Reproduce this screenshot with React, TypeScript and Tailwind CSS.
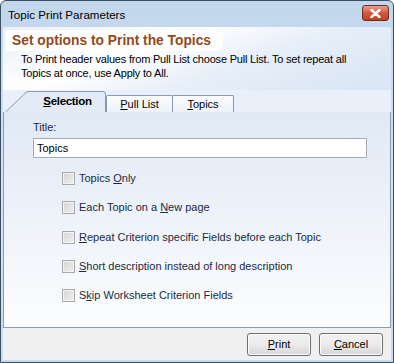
import React from 'react';

const font = { fontFamily: '"Liberation Sans", Arial, sans-serif' };

function Check({ children }: { children: React.ReactNode }) {
  return (
    <div className="flex items-center h-[29.3px]">
      <span className="w-[13px] h-[13px] border border-[#a9a9a9] bg-gradient-to-br from-[#d4d4d4] to-[#f0f0f0] shadow-[inset_0_0_0_1px_#f4f4f4]" />
      <span className="ml-[4px] text-[11px] text-[#1b2a3f] leading-none">{children}</span>
    </div>
  );
}

function Btn({ children }: { children: React.ReactNode }) {
  return (
    <button className="w-[64px] h-[23px] rounded-[3px] border border-[#707070] bg-gradient-to-b from-[#f2f2f2] via-[#ebebeb] to-[#d6d6d6] shadow-[inset_0_0_0_1px_#fcfcfc] text-[11px] text-black">
      {children}
    </button>
  );
}

export default function App() {
  return (
    <div style={font} className="w-[394px] h-[363px] overflow-hidden">
      <div className="w-full h-full flex flex-col rounded-t-[6px] border border-[#3a4f66] bg-gradient-to-b from-[#c2d6ec] via-[#d5e4f4] to-[#c8dcf0]">
        {/* Title bar */}
        <div className="h-[26px] flex items-center justify-between pl-[7px] pr-[4px]">
          <span className="text-[11.6px] text-black mt-[1px]">Topic Print Parameters</span>
          <div className="w-[27px] h-[16px] rounded-[3px] border border-[#6d2e22] bg-gradient-to-b from-[#e8a190] via-[#d1563c] to-[#c1421f] flex items-center justify-center mt-[-2px]">
            <svg width="11" height="9" viewBox="0 0 11 9">
              <path d="M1.5 1 L9.5 8 M9.5 1 L1.5 8" stroke="#fff" strokeWidth="2.4" strokeLinecap="round" />
            </svg>
          </div>
        </div>

        {/* Client area */}
        <div className="flex-1 flex flex-col mx-[2px] mb-[2px]">
          {/* Header */}
          <div className="h-[63px] pt-[1px] bg-[linear-gradient(160deg,#e8f0fa_0%,#ffffff_35%,#e7eff9_60%,#d8e5f3_100%)]">
            <div className="inline-flex items-center h-[21px] pl-[6px] pr-[12px] rounded-r-[7px] rounded-l-[2px] ml-[3px] bg-white">
              <span className="text-[13.8px] font-bold text-[#94491c] leading-none">Set options to Print the Topics</span>
            </div>
            <p className="mt-0 ml-[18px] mr-[18px] text-[11px] tracking-[-0.2px] leading-[14px] text-black">
              To Print header values from Pull List choose Pull List. To set repeat all Topics at once, use Apply to All.
            </p>
          </div>

          {/* Tabs */}
          <div className="h-[22px] flex items-end bg-[#e9f0f9]">
            <div className="relative w-[101px] h-[21px] ml-[2px] flex items-center justify-center pl-[34px]">
              <svg className="absolute inset-0" width="101" height="21" viewBox="0 0 101 21">
                <path d="M0.5 21 L21 1.5 Q22 0.5 23 0.5 L98 0.5 Q100.5 0.5 100.5 3 L100.5 21" fill="#e2eaf5" stroke="#8d9aab" />
              </svg>
              <span className="relative text-[11.5px] font-bold text-black mr-[10px] mt-[1px] tracking-[-0.3px]">
                <u>S</u>election
              </span>
            </div>
            <div className="w-[67px] h-[17px] border border-b-0 border-[#8d9aab] rounded-t-[2px] bg-gradient-to-b from-[#fbfcfe] to-[#edf2f9] flex items-center justify-center text-[11px] text-black">
              <span><u>P</u>ull List</span>
            </div>
            <div className="w-[62px] h-[17px] ml-[-1px] border border-b-0 border-[#8d9aab] rounded-t-[2px] bg-gradient-to-b from-[#fbfcfe] to-[#edf2f9] flex items-center justify-center text-[11px] text-black">
              <span><u>T</u>opics</span>
            </div>
          </div>

          {/* Panel */}
          <div className="h-[216px] border border-t-0 border-[#8d9aab] bg-gradient-to-b from-[#e0e9f5] via-[#eef3fa] to-[#fcfdfe] flex flex-col pl-[29px] pr-[24px]">
            <label className="mt-[10px] text-[11px] text-[#1b2a3f] leading-none">Title:</label>
            <div className="mt-[5px] h-[20px] w-[334px] border border-[#a5acb5] bg-white flex items-center px-[3px] text-[11px] text-black">
              Topics
            </div>
            <div className="mt-[6px] ml-[29px] flex flex-col">
              <Check>Topics <u>O</u>nly</Check>
              <Check>Each Topic on a <u>N</u>ew page</Check>
              <Check><u>R</u>epeat Criterion specific Fields before each Topic</Check>
              <Check><u>S</u>hort description instead of long description</Check>
              <Check>S<u>k</u>ip Worksheet Criterion Fields</Check>
            </div>
          </div>

          {/* Bottom bar */}
          <div className="flex-1 bg-[#f0f0f0] flex items-center justify-end gap-[8px] pr-[8px]">
            <Btn><u>P</u>rint</Btn>
            <Btn><u>C</u>ancel</Btn>
          </div>
        </div>
      </div>
    </div>
  );
}
